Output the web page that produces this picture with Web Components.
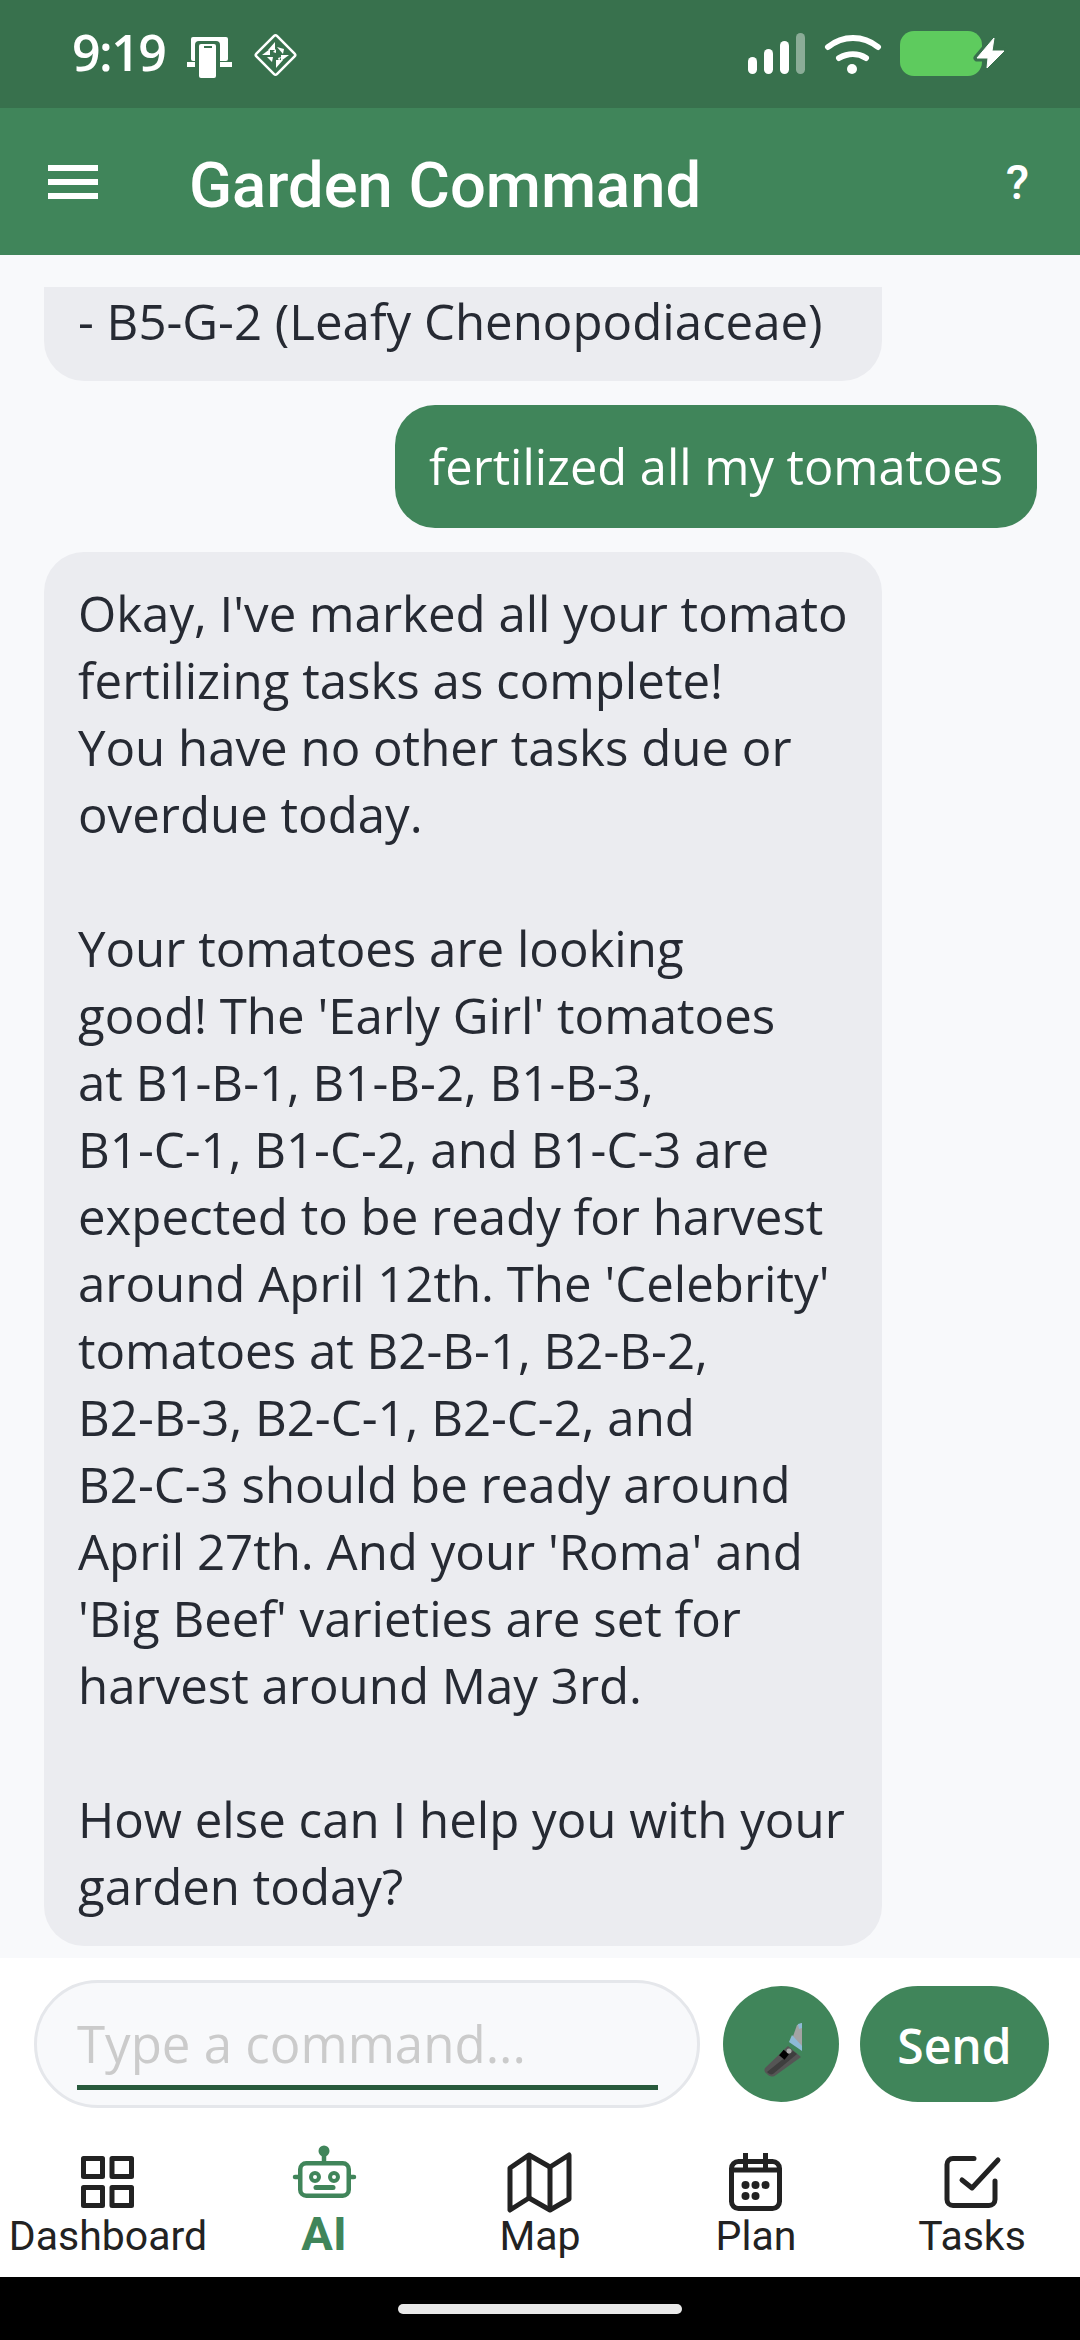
<!DOCTYPE html>
<html lang="en">
<head>
<meta charset="utf-8">
<title>Garden Command</title>
<style>
  html, body { margin: 0; padding: 0; background: #000; }
</style>
</head>
<body>
<garden-app></garden-app>

<script>
class StatusBar extends HTMLElement {
  constructor() {
    super();
    this.attachShadow({ mode: "open" });
    this.shadowRoot.innerHTML = /*html*/ `
      <style>
        :host { display: block; height: 108px; background: #38714d; color: #fff; }
        .bar { position: relative; height: 108px; }
        .time { position: absolute; left: 72px; top: 20px; font: 600 50px/64px "Open Sans", sans-serif; letter-spacing: -1.5px; }
        svg { position: absolute; left: 0; top: 0; display: block; }
      </style>
      <div class="bar">
        <svg width="1080" height="108" viewBox="0 0 1080 108">
          <!-- phone on reader -->
          <rect x="191" y="37" width="37" height="24" rx="2" fill="#fff"/>
          <rect x="187" y="62" width="10" height="5" fill="#fff"/>
          <rect x="218" y="62" width="14" height="5" fill="#fff"/>
          <rect x="195" y="41" width="25" height="37" rx="4" fill="#38714d"/>
          <rect x="199" y="44" width="17" height="34" rx="2" fill="#fff"/>
          <rect x="204" y="46" width="8" height="2" fill="#38714d"/>
          <!-- diamond -->
          <rect x="261" y="40.5" width="29" height="29" rx="2" transform="rotate(45 275.5 55)" fill="none" stroke="#fff" stroke-width="2.5"/>
          <g fill="#fff">
            <path d="M275 42l-7 8h7z"/><path d="M262 55l8-6v6z"/><path d="M276 68l7-8h-7z"/><path d="M289 55l-8 6v-6z"/>
            <path d="M277 47l7 2-1 5z"/><path d="M267 57h6l-1 5z"/><path d="M273 52l3-3v4z"/><path d="M278 58l3-1-2 4z"/>
          </g>
          <!-- signal -->
          <rect x="748" y="57" width="9" height="17" rx="4.5" fill="#fff"/>
          <rect x="764" y="49" width="9" height="25" rx="4.5" fill="#fff"/>
          <rect x="780" y="41" width="9" height="33" rx="4.5" fill="#fff"/>
          <rect x="796" y="33" width="9" height="41" rx="4.5" fill="#fff" opacity=".42"/>
          <!-- wifi -->
          <path d="M828 47c15-12 35-12 50 0" fill="none" stroke="#fff" stroke-width="6" stroke-linecap="round"/>
          <path d="M839 58c9-5 19-5 27 0" fill="none" stroke="#fff" stroke-width="6" stroke-linecap="round"/>
          <circle cx="852" cy="69" r="5" fill="#fff"/>
          <!-- battery -->
          <rect x="900" y="31" width="82" height="45" rx="14" fill="#5ecb5e"/>
          <path d="M994 38L977 58h11l-1 10 17-17h-12z" fill="#38714d" stroke="#38714d" stroke-width="7" stroke-linejoin="round"/>
          <path d="M994 38L977 58h11l-1 10 17-17h-12z" fill="#fff" stroke="#fff" stroke-width="1" stroke-linejoin="round"/>
        </svg>
        <span class="time">9:19</span>
      </div>
    `;
  }
}
customElements.define("status-bar", StatusBar);

class AppHeader extends HTMLElement {
  constructor() {
    super();
    this.attachShadow({ mode: "open" });
    this.shadowRoot.innerHTML = /*html*/ `
      <style>
        :host { display: flex; align-items: center; height: 147px; background: #40855a; color: #fff; font-family: Roboto, sans-serif; }
        .menu { width: 50px; height: 34px; margin-left: 48px; display: flex; flex-direction: column; justify-content: space-between; }
        .menu i { display: block; height: 6px; background: #fff; }
        h1 { flex: 1; margin: 7px 0 0 91px; font: 500 63.3px/70px Roboto, sans-serif; }
        .help { margin: 2px 51px 0 0; font: 500 48px/60px Roboto, sans-serif; }
      </style>
      <div class="menu"><i></i><i></i><i></i></div>
      <h1><slot></slot></h1>
      <div class="help">?</div>
    `;
  }
}
customElements.define("app-header", AppHeader);

class ChatBubble extends HTMLElement {
  constructor() {
    super();
    this.attachShadow({ mode: "open" });
    this.shadowRoot.innerHTML = /*html*/ `
      <style>
        :host {
          display: block;
          box-sizing: border-box;
          align-self: flex-start;
          width: 838px;
          margin-left: 44px;
          padding: 27px 34px;
          border-radius: 40px;
          background: #ebecf0;
          color: #262a33;
          font: 400 49.2px/67px "Open Sans", sans-serif;
        }
        :host([cut]) { padding-top: 0; border-radius: 0 0 40px 40px; }
        :host([from="user"]) {
          align-self: flex-end;
          width: auto;
          margin: 0 43px 0 0;
          padding: 28px 34px;
          background: #40855a;
          color: #fff;
          font-size: 48.8px;
        }
      </style>
      <slot></slot>
    `;
  }
}
customElements.define("chat-bubble", ChatBubble);

class ChatList extends HTMLElement {
  constructor() {
    super();
    this.attachShadow({ mode: "open" });
    this.shadowRoot.innerHTML = /*html*/ `
      <style>
        :host {
          display: flex;
          flex-direction: column;
          gap: 24px;
          height: 1703px;
          box-sizing: border-box;
          padding-top: 32px;
          background: #f8f9fb;
          overflow: hidden;
        }
      </style>
      <slot></slot>
    `;
  }
}
customElements.define("chat-list", ChatList);

class ChatComposer extends HTMLElement {
  constructor() {
    super();
    this.attachShadow({ mode: "open" });
    this.shadowRoot.innerHTML = /*html*/ `
      <style>
        :host { display: flex; align-items: center; height: 150px; box-sizing: border-box; padding: 22px 31px 0 34px; background: #fff; font-family: "Open Sans", sans-serif; }
        .input {
          box-sizing: border-box;
          width: 666px;
          height: 128px;
          padding: 0 39px 0 40px;
          border: 3px solid #e5e7eb;
          border-radius: 64px;
          background: #f8f9fb;
        }
        .field {
          box-sizing: border-box;
          height: 107px;
          padding-top: 30px;
          border-bottom: 5px solid #285a3c;
          color: #cbcbcb;
          font-size: 51px;
          line-height: 60px;
          white-space: nowrap;
        }
        .mic { flex: none; width: 116px; height: 116px; margin-left: 23px; border-radius: 50%; background: #40855a; }
        .mic svg { display: block; }
        .send {
          flex: none;
          width: 189px;
          height: 116px;
          margin-left: 21px;
          border-radius: 58px;
          background: #40855a;
          color: #fff;
          text-align: center;
          font-size: 48px;
          font-weight: 600;
          line-height: 120px;
        }
      </style>
      <div class="input"><div class="field"><slot></slot></div></div>
      <div class="mic">
        <svg width="116" height="116" viewBox="0 0 116 116">
          <path d="M42 82L65 60l13 11-25 18c-4 3-7 1-9-1-3-2-3-4-2-6z" fill="#555"/>
          <path d="M44 86l26-21 4 3-24 20c-2 1-4 0-6-2z" fill="#3e3e3e"/>
          <rect x="58" y="65" width="7" height="7" fill="#000" transform="rotate(40 61 68)"/>
          <circle cx="66" cy="65" r="2.5" fill="#a8a8a8"/>
          <path d="M74 39l5-2v27l-11-8z" fill="#a3a3a3"/>
          <path d="M69 49l10 11v5L66 56z" fill="#8dbad6"/>
          <path d="M75 38l4-1v5l-3 1z" fill="#8dbad6"/>
        </svg>
      </div>
      <div class="send">Send</div>
    `;
  }
}
customElements.define("chat-composer", ChatComposer);

class TabItem extends HTMLElement {
  constructor() {
    super();
    this.attachShadow({ mode: "open" });
    this.shadowRoot.innerHTML = /*html*/ `
      <style>
        :host { display: flex; flex-direction: column; align-items: center; color: #222; font: 400 41px/46px Roboto, sans-serif; white-space: nowrap; }
        :host([active]) { color: #40855a; font-weight: 700; font-size: 47px; line-height: 42px; }
        .icon { height: 70px; }
        ::slotted(svg) { display: block; }
      </style>
      <div class="icon"><slot name="icon"></slot></div>
      <div><slot></slot></div>
    `;
  }
}
customElements.define("tab-item", TabItem);

class TabBar extends HTMLElement {
  constructor() {
    super();
    this.attachShadow({ mode: "open" });
    this.shadowRoot.innerHTML = /*html*/ `
      <style>
        :host {
          display: grid;
          grid-template-columns: repeat(5, 216px);
          height: 169px;
          box-sizing: border-box;
          padding-top: 35px;
          background: #fff;
        }
      </style>
      <slot></slot>
    `;
  }
}
customElements.define("tab-bar", TabBar);

class HomeBar extends HTMLElement {
  constructor() {
    super();
    this.attachShadow({ mode: "open" });
    this.shadowRoot.innerHTML = /*html*/ `
      <style>
        :host { display: flex; justify-content: center; height: 63px; box-sizing: border-box; padding-top: 27px; background: #000; }
        i { display: block; width: 284px; height: 10px; border-radius: 5px; background: #e9e9e9; }
      </style>
      <i></i>
    `;
  }
}
customElements.define("home-bar", HomeBar);

class GardenApp extends HTMLElement {
  constructor() {
    super();
    this.attachShadow({ mode: "open" });
    this.shadowRoot.innerHTML = /*html*/ `
      <style>
        :host { display: block; width: 1080px; height: 2340px; overflow: hidden; }
      </style>
      <status-bar></status-bar>
      <app-header>Garden Command</app-header>
      <chat-list>
        <chat-bubble cut>- B5-G-2 (Leafy Chenopodiaceae)</chat-bubble>
        <chat-bubble from="user">fertilized all my tomatoes</chat-bubble>
        <chat-bubble>
          Okay, I've marked all your tomato<br>
          fertilizing tasks as complete!<br>
          You have no other tasks due or<br>
          overdue today.<br>
          <br>
          Your tomatoes are looking<br>
          good! The 'Early Girl' tomatoes<br>
          at B1-B-1, B1-B-2, B1-B-3,<br>
          B1-C-1, B1-C-2, and B1-C-3 are<br>
          expected to be ready for harvest<br>
          around April 12th. The 'Celebrity'<br>
          tomatoes at B2-B-1, B2-B-2,<br>
          B2-B-3, B2-C-1, B2-C-2, and<br>
          B2-C-3 should be ready around<br>
          April 27th. And your 'Roma' and<br>
          'Big Beef' varieties are set for<br>
          harvest around May 3rd.<br>
          <br>
          How else can I help you with your<br>
          garden today?
        </chat-bubble>
      </chat-list>
      <chat-composer>Type a command...</chat-composer>
      <tab-bar>
        <tab-item>
          <svg slot="icon" width="80" height="70" viewBox="0 0 80 70" fill="none" stroke="currentColor" stroke-width="5" stroke-linejoin="round">
            <rect x="15.5" y="15.5" width="19" height="18"/><rect x="44" y="15.5" width="19.5" height="18"/>
            <rect x="15.5" y="44.5" width="19" height="18"/><rect x="44" y="44.5" width="19.5" height="18"/>
          </svg>
          Dashboard
        </tab-item>
        <tab-item active>
          <svg slot="icon" width="80" height="70" viewBox="0 0 80 70" fill="none" stroke="currentColor" stroke-width="4.5">
            <circle cx="40" cy="8" r="5.5" fill="currentColor" stroke="none"/>
            <path d="M40 10v10"/>
            <rect x="16.25" y="20.25" width="48.5" height="32.5" rx="6"/>
            <path d="M11 34h4M66 34h4" stroke-linecap="round"/>
            <circle cx="31" cy="34" r="4" stroke-width="4"/>
            <circle cx="50" cy="34" r="4" stroke-width="4"/>
            <path d="M32 44.5h17" stroke-width="5" stroke-linecap="round"/>
          </svg>
          AI
        </tab-item>
        <tab-item>
          <svg slot="icon" width="80" height="70" viewBox="0 0 80 70" fill="none" stroke="currentColor" stroke-width="5" stroke-linejoin="round">
            <path d="M10 25L29 12l21 12 19-12v44L50 67 29 55 10 67z"/>
            <path d="M29 12v43M50 24v43"/>
          </svg>
          Map
        </tab-item>
        <tab-item>
          <svg slot="icon" width="80" height="70" viewBox="0 0 80 70" fill="none" stroke="currentColor" stroke-width="5">
            <rect x="15.5" y="18.5" width="48" height="47" rx="7"/>
            <path d="M15.5 27h48M29.5 10v15M49.5 10v15"/>
            <g fill="currentColor" stroke="none">
              <circle cx="29.5" cy="42" r="4"/><circle cx="39.5" cy="42" r="4"/><circle cx="49.5" cy="42" r="4"/>
              <circle cx="29.5" cy="53" r="4"/><circle cx="39.5" cy="53" r="4"/>
            </g>
          </svg>
          Plan
        </tab-item>
        <tab-item>
          <svg slot="icon" width="80" height="70" viewBox="0 0 80 70" fill="none" stroke="currentColor" stroke-width="5" stroke-linecap="round" stroke-linejoin="round">
            <path d="M42 15.5H21a6 6 0 0 0-6 6v35a6 6 0 0 0 6 6h36a6 6 0 0 0 6-6V38"/>
            <path d="M30 37l10 8 26-28"/>
          </svg>
          Tasks
        </tab-item>
      </tab-bar>
      <home-bar></home-bar>
    `;
  }
}
customElements.define("garden-app", GardenApp);
</script>
</body>
</html>
